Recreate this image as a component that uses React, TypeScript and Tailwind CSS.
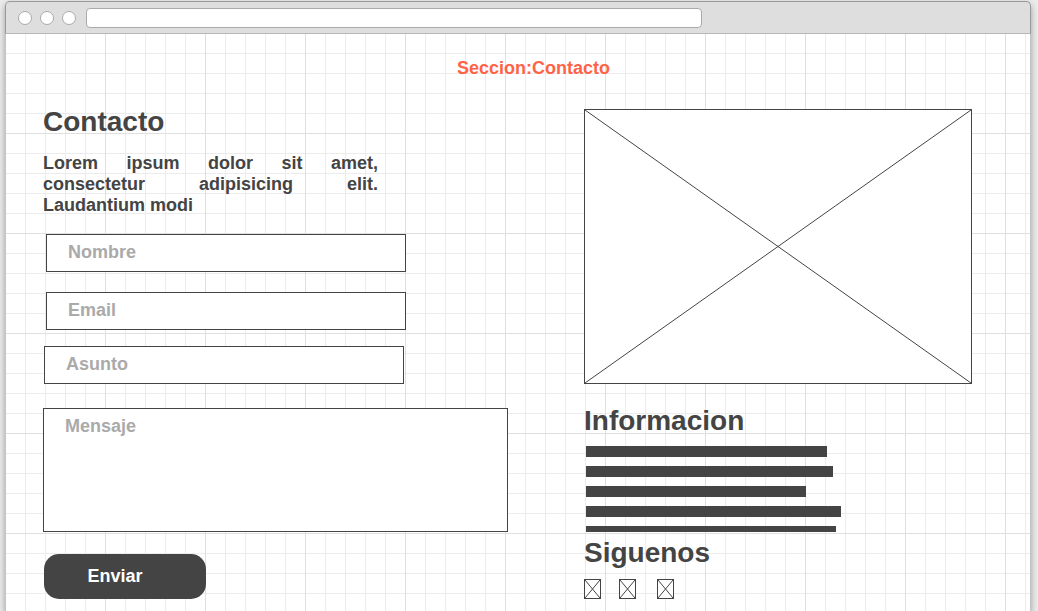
import React from "react";

type CrossBoxProps = { className: string };

function CrossBox({ className }: CrossBoxProps) {
  return (
    <div className={`border border-[#444] bg-white ${className}`}>
      <svg
        className="block h-full w-full"
        viewBox="0 0 100 100"
        preserveAspectRatio="none"
        aria-hidden="true"
      >
        <path
          d="M0 0L100 100M100 0L0 100"
          stroke="#444"
          strokeWidth="1"
          vectorEffect="non-scaling-stroke"
          fill="none"
        />
      </svg>
    </div>
  );
}

const field =
  "block max-w-full rounded-none border border-[#444] bg-white px-[21px] pt-[7px] pb-2 text-lg leading-[21px] font-bold text-[#444] placeholder:text-[#aaa] placeholder:opacity-100 outline-none";

const heading = "text-[28px] leading-[30px] font-bold";

function ContactForm() {
  return (
    <form className="mt-[18px]" onSubmit={(e) => e.preventDefault()}>
      <div className="flex flex-col gap-5 pl-[3px]">
        <input className={`${field} h-[38px] w-[360px]`} type="text" aria-label="Nombre" placeholder="Nombre" />
        <input className={`${field} h-[38px] w-[360px]`} type="email" aria-label="Email" placeholder="Email" />
      </div>
      <div className="mt-4 pl-px">
        <input className={`${field} h-[38px] w-[360px]`} type="text" aria-label="Asunto" placeholder="Asunto" />
      </div>
      <textarea
        className={`${field} mt-6 h-[124px] w-[465px] resize-none`}
        aria-label="Mensaje"
        placeholder="Mensaje"
      />
      <div className="mt-[22px] pl-px">
        <button
          type="submit"
          className="block h-[45px] w-[162px] rounded-[15px] bg-[#444] pr-5 text-center text-lg leading-[21px] font-bold text-white"
        >
          Enviar
        </button>
      </div>
    </form>
  );
}

function TextLines() {
  return (
    <div className="mt-[10px] ml-[2px] flex flex-col gap-[9px]" aria-hidden="true">
      <div className="h-[11px] w-[241px] bg-[#444]" />
      <div className="h-[11px] w-[247px] bg-[#444]" />
      <div className="h-[11px] w-[220px] bg-[#444]" />
      <div className="h-[11px] w-[255px] bg-[#444]" />
      <div className="h-[6px] w-[250px] bg-[#444]" />
    </div>
  );
}

function BrowserBar() {
  return (
    <header className="flex h-[33px] items-center gap-2 rounded-t-[5px] border border-[#999] border-b-[#b7b7b7] bg-[#dedede] px-3">
      <span className="size-[14px] rounded-full border border-[#aaa] bg-white" />
      <span className="size-[14px] rounded-full border border-[#aaa] bg-white" />
      <span className="size-[14px] rounded-full border border-[#aaa] bg-white" />
      <input
        type="text"
        aria-label="URL"
        className="ml-[2px] h-5 max-w-[616px] flex-1 rounded-[4px] border border-[#aaa] bg-white px-2 text-xs outline-none"
      />
    </header>
  );
}

export default function App() {
  return (
    <div className="flex min-h-screen flex-col overflow-hidden bg-[#ececec] pt-px pr-[7px] pl-[5px] font-['Liberation_Sans',Arial,sans-serif] text-[#444]">
      <div className="flex flex-1 flex-col rounded-t-[5px] shadow-[0_3px_7px_rgba(0,0,0,0.35)]">
        <BrowserBar />
        <main className="flex-1 border-x border-[#c4c4c4] bg-white bg-[linear-gradient(to_right,transparent_99px,#dfdfdf_99px),linear-gradient(to_bottom,transparent_99px,#dfdfdf_99px),linear-gradient(to_right,transparent_19px,#ececec_19px),linear-gradient(to_bottom,transparent_19px,#ececec_19px)] bg-[length:100px_100px,100px_100px,20px_20px,20px_20px] pt-6 pr-[58px] pb-3 pl-[37px]">
          <h1 className="pl-[52px] text-center text-lg leading-[21px] font-bold text-[#ff6347]">
            Seccion:Contacto
          </h1>
          <div className="mt-7 grid grid-cols-[541fr_388fr] items-start">
            <section>
              <h2 className={heading}>Contacto</h2>
              <p className="mt-4 max-w-[335px] text-justify text-lg leading-[21px] font-bold">
                Lorem ipsum dolor sit amet, consectetur adipisicing elit. Laudantium modi
              </p>
              <ContactForm />
            </section>
            <aside className="pt-[2px]">
              <CrossBox className="h-[275px] w-full" />
              <h2 className={`${heading} mt-[22px]`}>Informacion</h2>
              <TextLines />
              <h2 className={`${heading} mt-[6px]`}>Siguenos</h2>
              <div className="mt-[11px] flex">
                <CrossBox className="h-5 w-[17px]" />
                <CrossBox className="ml-[18px] h-5 w-[17px]" />
                <CrossBox className="ml-[21px] h-5 w-[17px]" />
              </div>
            </aside>
          </div>
        </main>
      </div>
    </div>
  );
}
